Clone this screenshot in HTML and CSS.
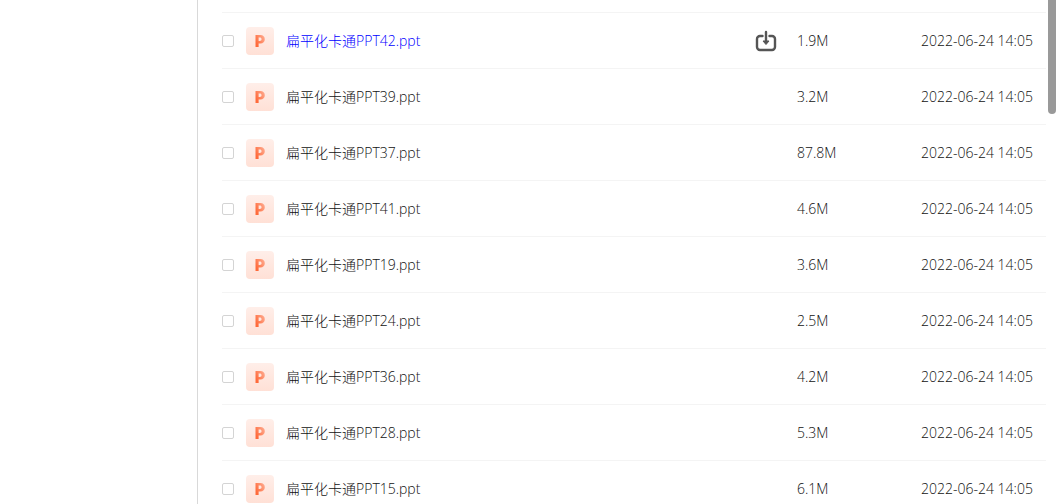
FILE: index.html
```html
<!DOCTYPE html>
<html lang="zh-CN">
<head>
    <meta charset="UTF-8">
    <meta name="viewport" content="width=device-width, initial-scale=1.0">
    <title>PPT</title>
    <link rel="stylesheet" href="styles.css">
</head>
<body>
    <div class="layout">
        <aside class="sidebar"></aside>
        <main class="content">
            <table class="file-list">
                <tbody id="fileRows"></tbody>
            </table>
        </main>
        <div class="scrollbar"><div class="thumb"></div></div>
    </div>

    <script>
        const files = [
            ['扁平化卡通PPT42.ppt', '1.9M'],
            ['扁平化卡通PPT39.ppt', '3.2M'],
            ['扁平化卡通PPT37.ppt', '87.8M'],
            ['扁平化卡通PPT41.ppt', '4.6M'],
            ['扁平化卡通PPT19.ppt', '3.6M'],
            ['扁平化卡通PPT24.ppt', '2.5M'],
            ['扁平化卡通PPT36.ppt', '4.2M'],
            ['扁平化卡通PPT28.ppt', '5.3M'],
            ['扁平化卡通PPT15.ppt', '6.1M']
        ];
        const active = 0;

        const saveButton = `
            <button type="button" aria-label="下载">
                <svg width="22" height="22" viewBox="0 0 22 22">
                    <path d="M7.500 6H5a3 3 0 0 0-3 3v8a3 3 0 0 0 3 3h12a3 3 0 0 0 3-3V9a3 3 0 0 0-3-3h-2.500M11 2v9" fill="none" stroke="#555" stroke-width="2.4" stroke-linecap="round"/>
                    <path d="M8 11h6l-3 3.500z" fill="#555" stroke="#555" stroke-linejoin="round"/>
                </svg>
            </button>`;

        document.getElementById('fileRows').innerHTML = files.map(([name, size], i) => `
            <tr class="${i === active ? 'active' : ''}">
                <td class="check"><input type="checkbox" aria-labelledby="file${i}"></td>
                <td class="icon"><div class="tile" aria-hidden="true"><span class="mark">P</span></div></td>
                <td class="name"><a href="#" id="file${i}">${name}</a></td>
                <td class="action">${i === active ? saveButton : ''}</td>
                <td class="size">${size}</td>
                <td class="date">2022-06-24 14:05</td>
            </tr>`).join('');
    </script>
</body>
</html>
```
FILE: styles.css
```css
body {
    margin: 0;
    background-color: #fff;
    color: #111;
    font-family: "Open Sans", "Noto Sans CJK SC", sans-serif;
    font-size: 14px;
    font-weight: 300;
    line-height: 20px;
}
.layout {
    display: flex;
    height: 100vh;
    overflow: hidden;
}
.sidebar {
    flex: 0 0 197px;
    border-right: 1px solid #d9d9d9;
}
.content {
    flex: 1;
    padding: 12px 0 0 24px;
}
.file-list {
    width: 100%;
    table-layout: fixed;
    border-spacing: 0;
    border-top: 1px solid #f4f4f4;
}
.file-list td {
    height: 55px;
    padding: 0;
    border-bottom: 1px solid #f4f4f4;
    vertical-align: middle;
    white-space: nowrap;
}
.file-list .check {
    width: 24px;
}
.file-list .icon {
    width: 40px;
}
.file-list .action {
    width: 42px;
}
.file-list .size {
    width: 124px;
}
.file-list .date {
    width: 125px;
}
.check input {
    display: block;
    appearance: none;
    box-sizing: border-box;
    width: 12px;
    height: 12px;
    margin: 0;
    border: 1px solid #d4d4d4;
    border-radius: 2px;
    background-color: #fff;
}
.tile {
    display: flex;
    align-items: center;
    justify-content: center;
    width: 28px;
    height: 28px;
    border-radius: 4px;
    background-image: linear-gradient(#ffeee9, #ffe0d6);
}
.mark {
    background-image: linear-gradient(to bottom left, #ffa588 20%, #ff6a3a 75%);
    -webkit-background-clip: text;
    background-clip: text;
    color: transparent;
    font-family: Inter, sans-serif;
    font-size: 16px;
    font-weight: 900;
}
.name a {
    color: inherit;
    text-decoration: none;
}
.active .name a {
    color: #00f;
}
.action button {
    display: block;
    padding: 0;
    border: none;
    background: none;
    cursor: pointer;
}
.action svg {
    display: block;
}
.scrollbar {
    flex: 0 0 8px;
    padding: 0 2px;
}
.thumb {
    height: 114px;
    border-radius: 0 0 4px 4px;
    background-color: #999;
}
```
